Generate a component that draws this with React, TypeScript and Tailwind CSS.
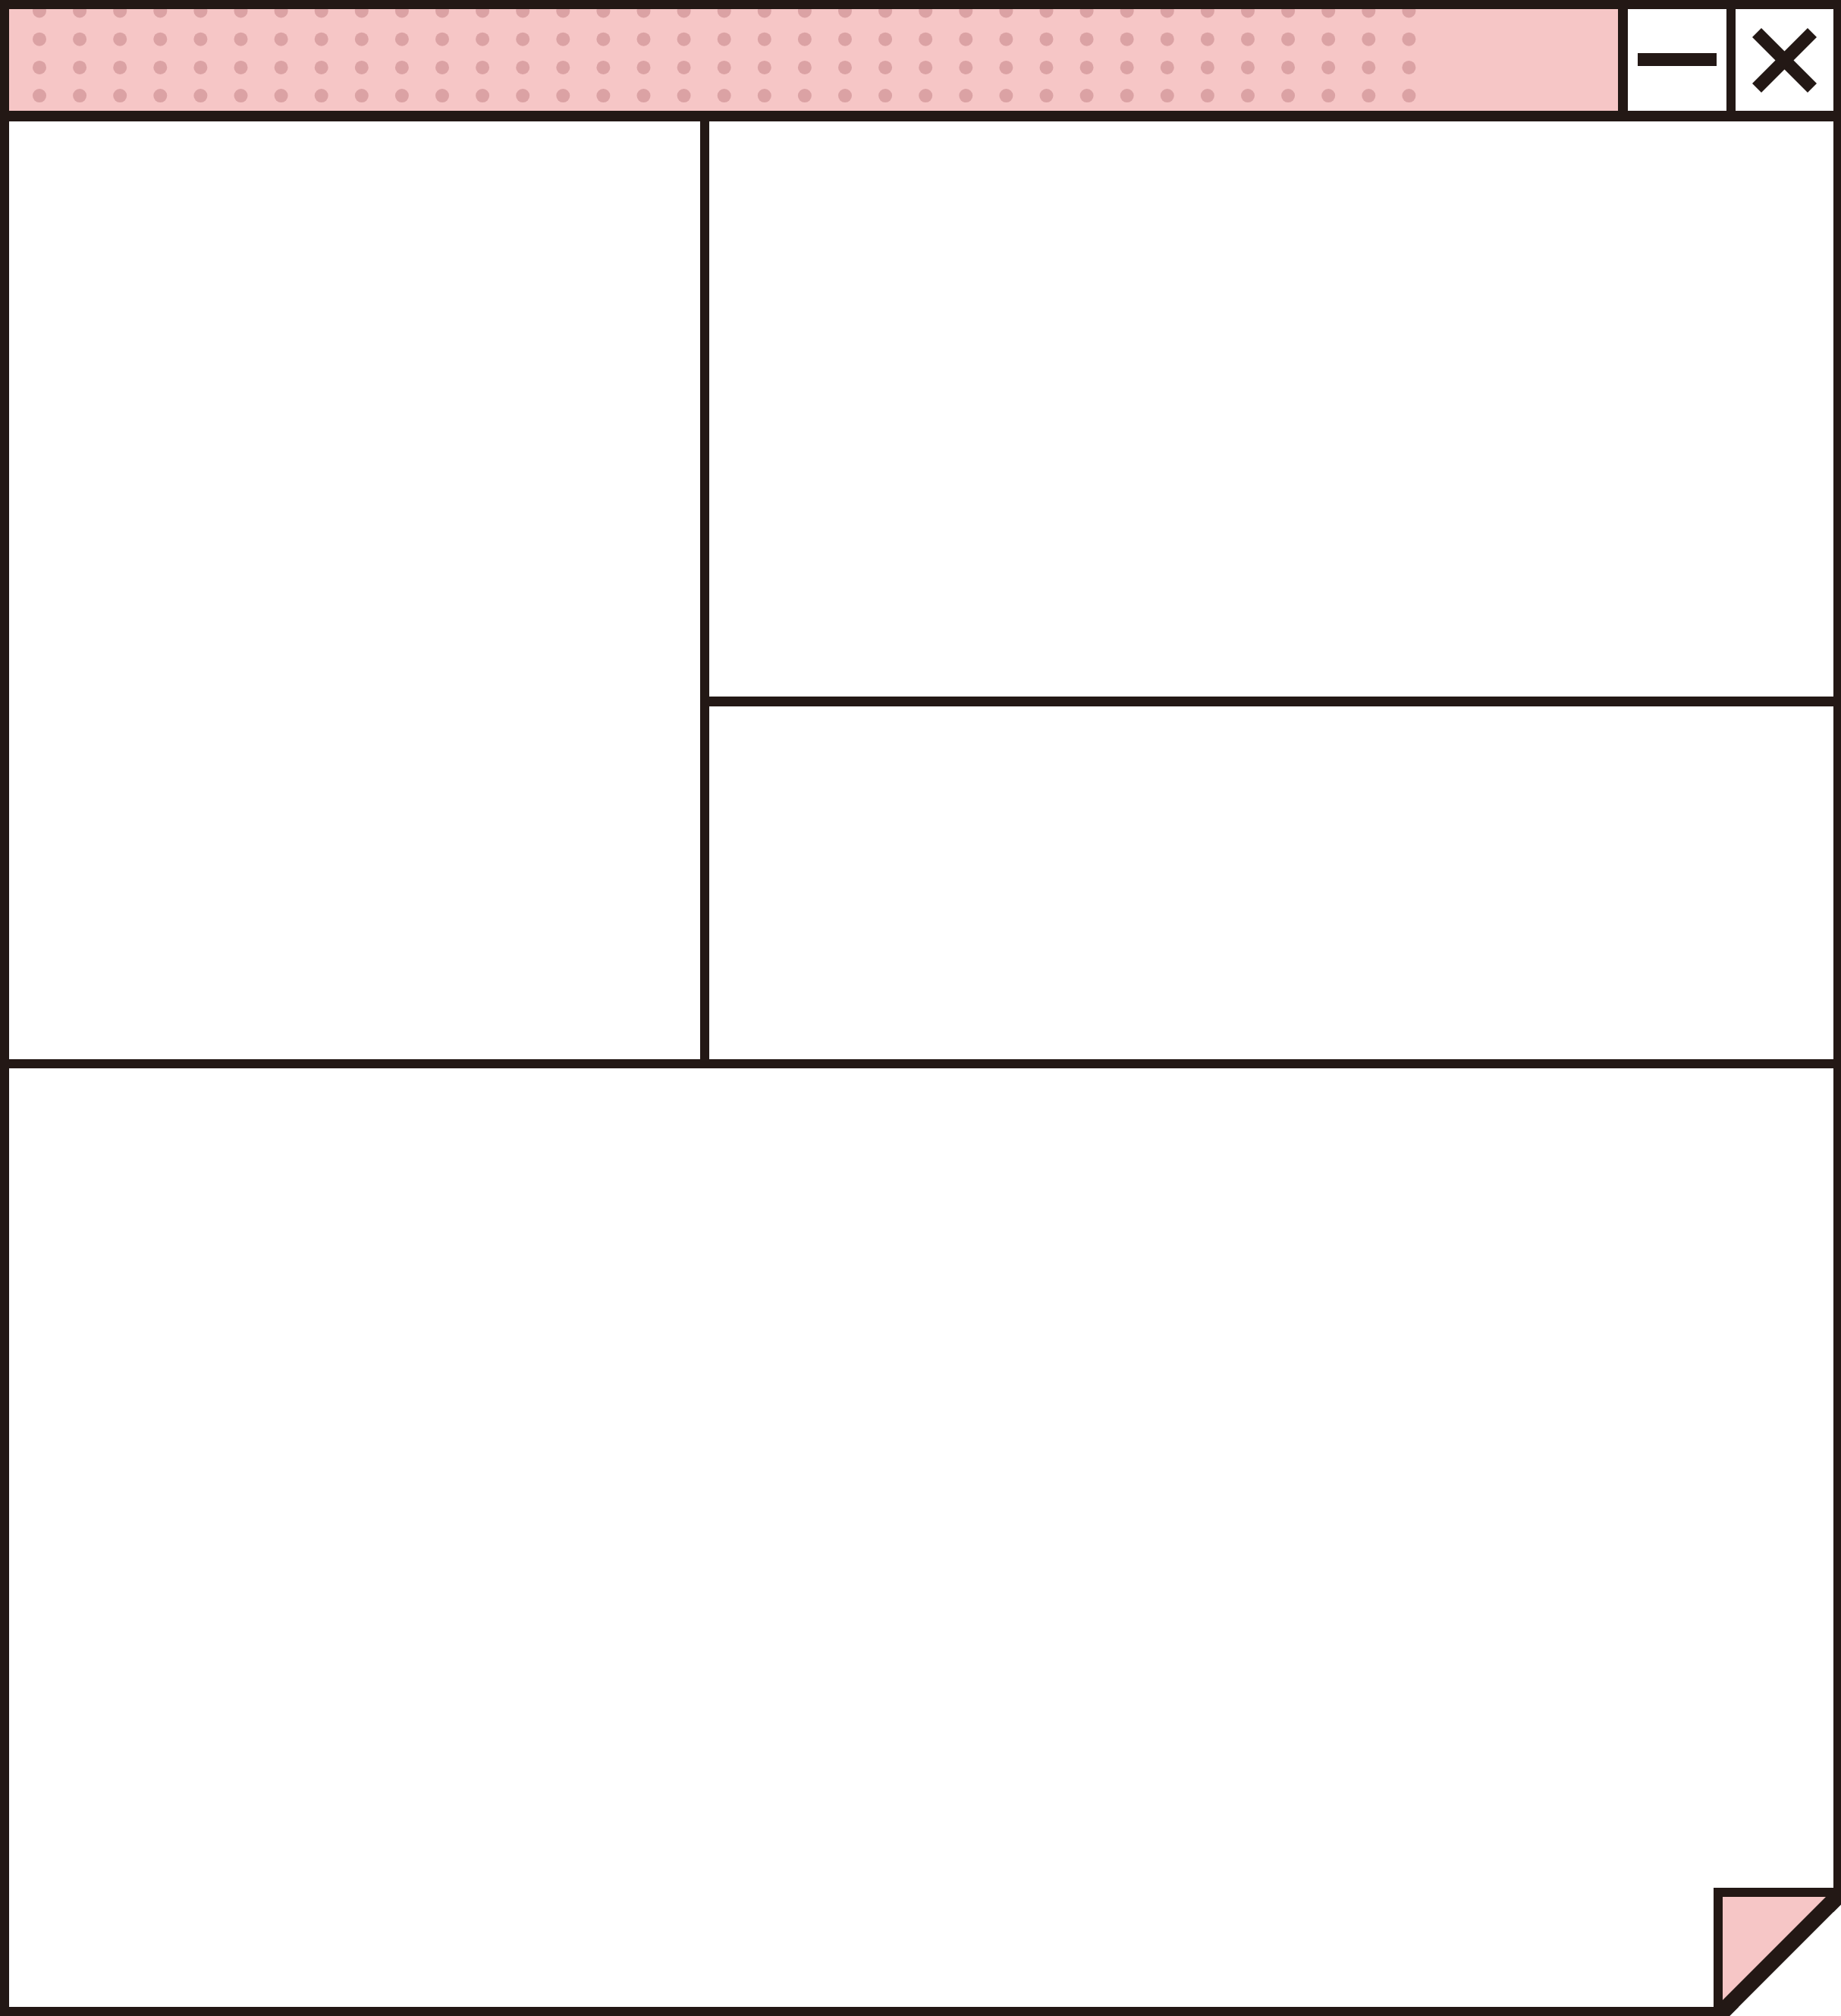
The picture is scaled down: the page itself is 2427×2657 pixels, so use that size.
import React from 'react';

const dark = '#231815';

// dotted texture on the title bar
const Dots = () => {
  const cols = Array.from({ length: 35 }, (_, i) => 40 + i * 53.1);
  const rows = [2.5, 39.7, 76.9, 114.1];
  return (
    <svg width={1870} height={134} className="block">
      {rows.map((cy) =>
        cols.map((cx) => <circle key={`${cx}-${cy}`} cx={cx} cy={cy} r={9} fill="#dba2a4" />)
      )}
    </svg>
  );
};

const MinIcon = () => (
  <svg width={130} height={134} className="block">
    <rect x={13} y={58} width={104} height={17} fill={dark} />
  </svg>
);

const CloseIcon = () => (
  <svg width={129} height={134} className="block">
    <line x1={28} y1={31} x2={101} y2={104} stroke={dark} strokeWidth={17} />
    <line x1={101} y1={31} x2={28} y2={104} stroke={dark} strokeWidth={17} />
  </svg>
);

// folded page corner, sits over the bottom-right of the window
const Fold = () => (
  <svg width={177} height={177} className="absolute left-[2250px] top-[2480px]">
    <polygon points="177,30 177,177 30,177" fill="#ffffff" />
    <polygon points="9,8 177,8 177,30 30,177 9,177" fill={dark} />
    <polygon points="21,20 157,20 21,156" fill="#f6c6c6" />
  </svg>
);

const App: React.FC = () => {
  return (
    <div className="relative w-[2427px] h-[2657px] bg-white">
      <div className="w-full h-full bg-[#231815] pt-[12px] pl-[12px] pr-[10px] pb-[12px] flex flex-col gap-[14px]">
        {/* title bar */}
        <div className="flex h-[134px] shrink-0">
          <div className="flex-1 bg-[#f6c6c6] overflow-hidden">
            <Dots />
          </div>
          <div className="w-[13px]" />
          <div className="w-[130px] bg-white">
            <MinIcon />
          </div>
          <div className="w-[12px]" />
          <div className="w-[129px] bg-white">
            <CloseIcon />
          </div>
        </div>

        {/* panels */}
        <div className="flex-1 flex flex-col gap-[12px]">
          <div className="h-[1236px] flex gap-[12px]">
            <div className="w-[911px] bg-white" />
            <div className="flex-1 flex flex-col gap-[13px]">
              <div className="h-[758px] bg-white" />
              <div className="flex-1 bg-white" />
            </div>
          </div>
          <div className="flex-1 bg-white" />
        </div>
      </div>
      <Fold />
    </div>
  );
};

export default App;
